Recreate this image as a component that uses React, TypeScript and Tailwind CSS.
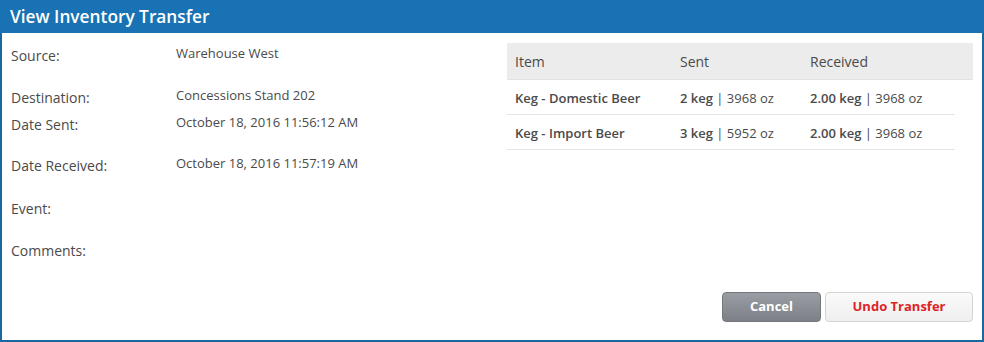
const rows = [
  { label: "Source:", value: "Warehouse West", h: "h-[42px]" },
  { label: "Destination:", value: "Concessions Stand 202", h: "h-[27px]" },
  { label: "Date Sent:", value: "October 18, 2016 11:56:12 AM", h: "h-[41px]" },
  { label: "Date Received:", value: "October 18, 2016 11:57:19 AM", h: "h-[43px]" },
  { label: "Event:", value: "", h: "h-[42px]" },
  { label: "Comments:", value: "", h: "h-[41px]" },
];

const items = [
  { name: "Keg - Domestic Beer", sentQty: "2 keg", sentOz: "3968 oz", recQty: "2.00 keg", recOz: "3968 oz" },
  { name: "Keg - Import Beer", sentQty: "3 keg", sentOz: "5952 oz", recQty: "2.00 keg", recOz: "3968 oz" },
];

export default function App() {
  return (
    <div className="w-[984px] h-[342px] bg-white flex flex-col font-['Open_Sans',sans-serif] text-[#444]">
      <div className="h-[33px] shrink-0 bg-[#1872b3] flex items-center px-[10px]">
        <h1 className="text-[17.3px] font-semibold text-white">View Inventory Transfer</h1>
      </div>
      <div className="flex-1 flex flex-col border-2 border-t-0 border-[#1a68a0]">
        <div className="flex flex-1 pt-[10px]">
          {/* details */}
          <div className="w-[505px] pl-[9px]">
            {rows.map((r) => (
              <div key={r.label} className={`flex ${r.h}`}>
                <div className="w-[165px] pt-[3px] text-[14px] leading-[20px] text-[#4a4a4a]">{r.label}</div>
                <div className="text-[13px] leading-[20px] text-[#4a4a4a]">{r.value}</div>
              </div>
            ))}
          </div>
          {/* items table */}
          <div className="w-[466px]">
            <div className="flex h-[37px] items-center bg-[#ececec] border-b border-[#e2e2e2] text-[14px] text-[#4a4a4a]">
              <div className="w-[165px] pl-[8px]">Item</div>
              <div className="w-[130px] pl-[8px]">Sent</div>
              <div className="pl-[8px]">Received</div>
            </div>
            {items.map((it) => (
              <div key={it.name} className="flex h-[35px] pt-[3px] items-center border-b border-[#e4e4e4] text-[13px] text-[#4a4a4a] w-[448px]">
                <div className="w-[165px] pl-[8px] font-semibold">{it.name}</div>
                <div className="w-[130px] pl-[8px]">
                  <span className="font-semibold">{it.sentQty}</span> | {it.sentOz}
                </div>
                <div className="pl-[8px]">
                  <span className="font-semibold">{it.recQty}</span> | {it.recOz}
                </div>
              </div>
            ))}
          </div>
        </div>
        <div className="flex justify-end gap-[4px] pr-[9px] pb-[18px]">
          <button className="w-[99px] h-[30px] rounded-[4px] bg-gradient-to-b from-[#9a9ea4] to-[#7d8187] border border-[#74787d] text-white text-[13px] font-bold">
            Cancel
          </button>
          <button className="w-[148px] h-[30px] rounded-[4px] bg-gradient-to-b from-[#fafafa] to-[#efefef] border border-[#d4d4d4] text-[#dc2327] text-[13px] font-bold">
            Undo Transfer
          </button>
        </div>
      </div>
    </div>
  );
}
